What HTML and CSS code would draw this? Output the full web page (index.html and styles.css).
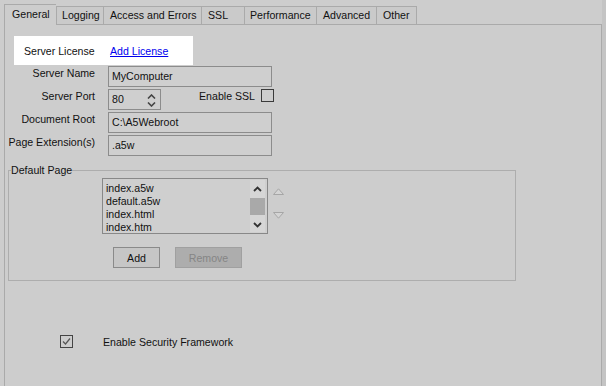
FILE: index.html
```
<!DOCTYPE html>
<html lang="en">

<head>
	<meta charset="UTF-8">
	<title>Server Settings</title>
	<link rel="stylesheet" href="styles.css">
</head>

<body>

	<div class="window">

		<div class="tabs">
			<div class="tab active">General</div>
			<div class="tab t-logging">Logging</div>
			<div class="tab t-access">Access and Errors</div>
			<div class="tab t-ssl">SSL</div>
			<div class="tab t-perf">Performance</div>
			<div class="tab t-adv">Advanced</div>
			<div class="tab t-other">Other</div>
		</div>

		<div class="panel">

			<div class="license">
				<span class="license-label">Server License</span>
				<a href="#">Add License</a>
			</div>

			<div class="form">
				<label>Server Name</label>
				<div class="field">MyComputer</div>

				<label>Server Port</label>
				<div class="port-row">
					<div class="field port">
						<span>80</span>
						<span class="spinner">
							<svg width="9" height="5" viewBox="0 0 9 5"><polyline points="1,4.5 4.5,1 8,4.5" fill="none" stroke="#444" stroke-width="1.6"/></svg>
							<svg width="9" height="5" viewBox="0 0 9 5"><polyline points="1,0.5 4.5,4 8,0.5" fill="none" stroke="#444" stroke-width="1.6"/></svg>
						</span>
					</div>
					<span class="ssl-label">Enable SSL</span>
					<span class="checkbox"></span>
				</div>

				<label>Document Root</label>
				<div class="field">C:\A5Webroot</div>

				<label>Page Extension(s)</label>
				<div class="field">.a5w</div>
			</div>

			<fieldset class="group">
				<legend>Default Page</legend>

				<div class="list-row">
					<div class="listbox">
						<ul class="items">
							<li>index.a5w</li>
							<li>default.a5w</li>
							<li>index.html</li>
							<li>index.htm</li>
						</ul>
						<div class="scrollbar">
							<svg width="9" height="6" viewBox="0 0 9 6"><polyline points="1,5 4.5,1.5 8,5" fill="none" stroke="#333" stroke-width="1.8"/></svg>
							<div class="thumb"></div>
							<svg width="9" height="6" viewBox="0 0 9 6"><polyline points="1,1 4.5,4.5 8,1" fill="none" stroke="#333" stroke-width="1.8"/></svg>
						</div>
					</div>
					<div class="movers">
						<svg width="11" height="7" viewBox="0 0 11 7"><polygon points="0.5,6.5 5.5,0.8 10.5,6.5" fill="#d4d4d4" stroke="#a6a6a6"/></svg>
						<svg width="11" height="7" viewBox="0 0 11 7"><polygon points="0.5,0.5 5.5,6.2 10.5,0.5" fill="#d4d4d4" stroke="#a6a6a6"/></svg>
					</div>
				</div>

				<div class="buttons">
					<button class="btn add">Add</button>
					<button class="btn remove" disabled>Remove</button>
				</div>
			</fieldset>

			<div class="security">
				<span class="checkbox checked">
					<svg width="11" height="11" viewBox="0 0 11 11"><polyline points="2,5.5 4.5,8 9,2.5" fill="none" stroke="#555" stroke-width="1.2"/></svg>
				</span>
				<span>Enable Security Framework</span>
			</div>

		</div>
	</div>

</body>

</html>
```

FILE: styles.css
```
* {
	box-sizing: border-box;
}

body {
	margin: 0;
	background: #c4c4c4;
	font-family: "Liberation Sans", Arial, sans-serif;
	font-size: 10.6px;
	color: #111;
}

.window {
	width: 602px;
	min-height: 100vh;
	background: #cdcdcd;
}

/* tab strip */

.tabs {
	display: flex;
	align-items: flex-end;
	height: 24px;
	padding-left: 4px;
}

.tab {
	height: 18px;
	line-height: 17px;
	padding-left: 5px;
	border-left: 1px solid #aaa;
	border-top: 1px solid #aaa;
	background: #cacaca;
	white-space: nowrap;
}

.tab.active {
	width: 52px;
	height: 21px;
	line-height: 18px;
	padding-left: 7px;
	margin-bottom: -1px;
	background: #cdcdcd;
	position: relative;
}

.t-logging { width: 47px; }
.t-access { width: 98px; padding-left: 6px; }
.t-ssl { width: 43px; padding-left: 6px; }
.t-perf { width: 72px; }
.t-adv { width: 60px; padding-left: 6px; }
.t-other { width: 41px; padding-left: 6px; border-right: 1px solid #aaa; }

/* page */

.panel {
	border: 1px solid #aaa;
	border-bottom: none;
	width: 598px;
	margin-left: 4px;
	min-height: calc(100vh - 24px);
	padding-top: 11px;
}

.license {
	display: flex;
	align-items: center;
	width: 179px;
	height: 29px;
	margin-left: 9px;
	padding-left: 10px;
	background: #fff;
}

.license-label {
	width: 86px;
}

.license a {
	color: #0000ee;
}

.form {
	display: grid;
	grid-template-columns: 90px 164px;
	grid-auto-rows: 21px;
	column-gap: 13px;
	row-gap: 2px;
	margin-top: 1px;
}

.form label {
	text-align: right;
	line-height: 15px;
	white-space: nowrap;
}

.field {
	height: 21px;
	line-height: 19px;
	padding-left: 3px;
	border: 1px solid #8c8c8c;
	background: #cfcfcf;
}

.port-row {
	display: flex;
	align-items: flex-start;
	width: 166px;
}

.field.port {
	display: flex;
	width: 53px;
	padding-right: 4px;
}

.spinner {
	margin-left: auto;
	display: flex;
	flex-direction: column;
	gap: 3px;
	padding-top: 4px;
}

.spinner svg {
	display: block;
}

.ssl-label {
	margin-left: auto;
	line-height: 15px;
}

.checkbox {
	display: inline-flex;
	align-items: center;
	justify-content: center;
	width: 13px;
	height: 13px;
	border: 1px solid #3a3a3a;
	margin-left: 6px;
}

/* default page group */

.group {
	margin: 8px 0 0 3px;
	width: 508px;
	padding: 0 0 12px 0;
	border: 1px solid #adadad;
	min-width: 0;
}

.group legend {
	margin-left: 2px;
	padding: 0;
	line-height: 13px;
}

.list-row {
	display: flex;
	align-items: flex-start;
	padding-left: 93px;
	margin-top: 1px;
}

.listbox {
	display: flex;
	width: 166px;
	height: 56px;
	border: 1px solid #888;
	background: #cfcfcf;
}

.items {
	flex: 1;
	margin: 0;
	padding: 3px 0 0 3px;
	list-style: none;
	line-height: 13px;
}

.scrollbar {
	width: 15px;
	margin: 1px 2px 1px 0;
	background: #d6d6d6;
	display: flex;
	flex-direction: column;
	align-items: center;
	padding-top: 6px;
}

.scrollbar svg {
	display: block;
}

.thumb {
	width: 15px;
	height: 17px;
	margin: 6px 0 7px;
	background: #a9a9a9;
}

.movers {
	display: flex;
	flex-direction: column;
	gap: 17px;
	margin: 10px 0 0 5px;
}

.movers svg {
	display: block;
}

.buttons {
	display: flex;
	gap: 15px;
	margin-top: 13px;
	padding-left: 104px;
}

.btn {
	height: 21px;
	padding: 0;
	font-family: inherit;
	font-size: 10.6px;
	color: #111;
	background: #c6c6c6;
	border: 1px solid #8a8a8a;
}

.btn.add {
	width: 47px;
}

.btn.remove {
	width: 67px;
	background: #adadad;
	border-color: #a0a0a0;
	color: #858585;
}

/* bottom option */

.security {
	display: flex;
	align-items: center;
	gap: 30px;
	margin: 54px 0 0 55px;
}

.security .checkbox {
	margin-left: 0;
	border-color: #444;
}
```
